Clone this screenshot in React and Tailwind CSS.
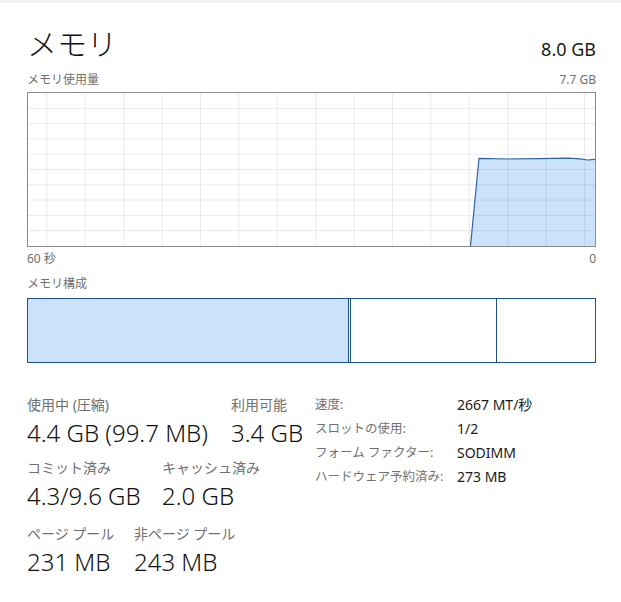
import React from 'react';

const FONT = "font-['Noto_Sans','Noto_Sans_CJK_JP',sans-serif]";

const UsageChart = () => {
    const vLines = Array.from({ length: 15 }, (_, i) => 19 + 38.4 * i);
    const hLines = Array.from({ length: 9 }, (_, i) => 15.3 * (i + 1));
    const line = '442.5,153 451,65.3 480,66 510,65.6 540,65.2 552,65.8 560,67 567,66.3';

    return (
        <div className="h-[155px] border border-[#8b8b8b] bg-white">
            <svg width="567" height="153" viewBox="0 0 567 153" className="block">
                <polygon points={`${line} 567,153`} fill="#cce2fb" />
                {vLines.map((x) => (
                    <line key={'v' + x} x1={x} y1="0" x2={x} y2="153" stroke="#000" strokeOpacity="0.08" strokeWidth="1" />
                ))}
                {hLines.map((y) => (
                    <line key={'h' + y} x1="0" y1={y} x2="567" y2={y} stroke="#000" strokeOpacity="0.08" strokeWidth="1" />
                ))}
                <polyline points={line} fill="none" stroke="#2f65a3" strokeWidth="1.2" />
            </svg>
        </div>
    );
};

const Stat = ({ label, value, className = '' }) => (
    <div className={className}>
        <div className="text-[14px] leading-[20px] text-[#707070] whitespace-nowrap">{label}</div>
        <div className="text-[24px] leading-[36px] font-light text-[#111] whitespace-nowrap">{value}</div>
    </div>
);

const details = [
    ['速度:', '2667 MT/秒'],
    ['スロットの使用:', '1/2'],
    ['フォーム ファクター:', 'SODIMM'],
    ['ハードウェア予約済み:', '273 MB'],
];

export default function App() {
    return (
        <div className={`w-[621px] h-[602px] bg-white overflow-hidden ${FONT}`}>
            <div className="h-[3px] bg-[#f0f0f0]" />
            <div className="pl-[27px] pr-[25px]">
                {/* header */}
                <div className="mt-[21px] flex items-end justify-between">
                    <div className="text-[30px] leading-[40px] font-light text-[#111]">メモリ</div>
                    <div className="text-[18px] leading-[24px] pb-[3px] text-[#1a1a1a]">8.0 GB</div>
                </div>

                <div className="mt-[8px] flex justify-between text-[12px] leading-[16px] text-[#707070]">
                    <span>メモリ使用量</span>
                    <span>7.7 GB</span>
                </div>

                <div className="mt-[4px]">
                    <UsageChart />
                </div>

                <div className="mt-[4px] flex justify-between text-[12px] leading-[16px] text-[#707070]">
                    <span>60 秒</span>
                    <span>0</span>
                </div>

                <div className="mt-[9px] text-[12px] leading-[16px] text-[#707070]">メモリ構成</div>

                {/* composition bar */}
                <div className="mt-[6px] h-[65px] flex border border-[#1d5089]">
                    <div className="w-[321px] bg-[#cce2fb] border-r border-[#1d5089]" />
                    <div className="w-[2px] border-r border-[#1d5089]" />
                    <div className="w-[146px] border-r border-[#1d5089]" />
                    <div className="flex-1" />
                </div>

                {/* stats */}
                <div className="mt-[30px] flex">
                    <div className="w-[288px] pt-[2px]">
                        <div className="flex">
                            <Stat className="w-[204px]" label="使用中 (圧縮)" value="4.4 GB (99.7 MB)" />
                            <Stat label="利用可能" value="3.4 GB" />
                        </div>
                        <div className="mt-[7px] flex">
                            <Stat className="w-[135px]" label="コミット済み" value="4.3/9.6 GB" />
                            <Stat label="キャッシュ済み" value="2.0 GB" />
                        </div>
                        <div className="mt-[10px] flex">
                            <Stat className="w-[107px]" label="ページ プール" value="231 MB" />
                            <Stat label="非ページ プール" value="243 MB" />
                        </div>
                    </div>
                    <div className="flex flex-col">
                        {details.map(([k, v]) => (
                            <div key={k} className="flex leading-[24px]">
                                <div className="w-[142px] text-[12.5px] text-[#707070] whitespace-nowrap">{k}</div>
                                <div className="text-[14px] text-[#1a1a1a] whitespace-nowrap">{v}</div>
                            </div>
                        ))}
                    </div>
                </div>
            </div>
        </div>
    );
}
